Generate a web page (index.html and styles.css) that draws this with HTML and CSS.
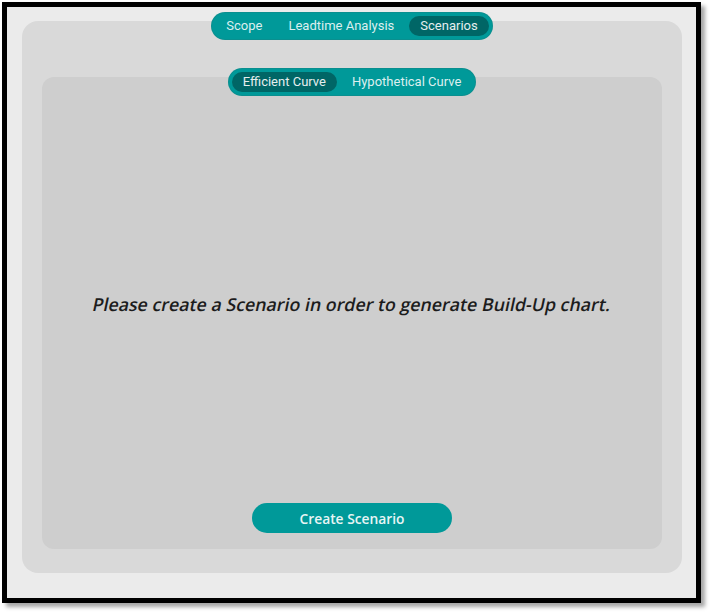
FILE: index.html
```html
<!DOCTYPE html>
<html>
<head>
<meta charset="utf-8">
<link rel="stylesheet" href="styles.css">
</head>
<body>
<div class="frame">
  <div class="card">
    <div class="tabs">
      <div class="tab">Scope</div>
      <div class="tab">Leadtime Analysis</div>
      <div class="tab active">Scenarios</div>
    </div>
    <div class="inner">
      <div class="tabs subtabs">
        <div class="tab active">Efficient Curve</div>
        <div class="tab">Hypothetical Curve</div>
      </div>
      <div class="message">
        <p>Please create a Scenario in order to generate Build-Up chart.</p>
      </div>
      <button class="create">Create Scenario</button>
    </div>
  </div>
</div>
</body>
</html>
```

FILE: styles.css
```css
html, body {
  margin: 0;
  padding: 0;
  background: #ffffff;
}
body {
  width: 710px;
  height: 612px;
  overflow: hidden;
}
.frame {
  margin: 2px 0 0 2px;
  border: 5px solid #000;
  background: #ebebeb;
  box-shadow: 4px 4px 4px rgba(0,0,0,0.35);
  padding: 14px 14px 25px 15px;
  box-sizing: border-box;
  width: 699px;
  height: 601px;
}
.card {
  height: 100%;
  background: #d9d9d9;
  border-radius: 16px;
  padding: 0 20px 24px;
  box-sizing: border-box;
  display: flex;
  flex-direction: column;
  align-items: center;
}
.tabs {
  display: flex;
  gap: 4px;
  padding: 3px;
  background: #009999;
  border-radius: 13px;
  margin-top: -8px;
  font-family: Roboto, "Liberation Sans", sans-serif;
  font-size: 13px;
  color: #dcefef;
  box-shadow: 0 0 0 1px #0a8f8f;
}
.tab {
  height: 20px;
  line-height: 20px;
  padding: 0 11px;
  border-radius: 10px;
}
.tab.active {
  background: #006666;
  color: #e6eeee;
}
.subtabs {
  gap: 4px;
}
.inner {
  margin-top: 38px;
  align-self: stretch;
  flex: 1;
  background: #cecece;
  border-radius: 12px;
  display: flex;
  flex-direction: column;
  align-items: center;
  padding-bottom: 16px;
}
.message {
  flex: 1;
  display: flex;
  align-items: center;
  justify-content: center;
  padding-top: 10px;
}
.message p {
  margin: 0;
  font-family: "Open Sans", "Liberation Sans", sans-serif;
  font-style: normal;
  font-weight: 600;
  font-size: 17.8px;
  color: #1c1c1c;
  transform: skewX(-12deg);
}
.create {
  width: 200px;
  height: 30px;
  border: none;
  border-radius: 15px;
  background: #009999;
  color: #e8f5f5;
  font-family: "Open Sans", "Liberation Sans", sans-serif;
  font-weight: 600;
  font-size: 13.8px;
  padding: 0;
}
```
